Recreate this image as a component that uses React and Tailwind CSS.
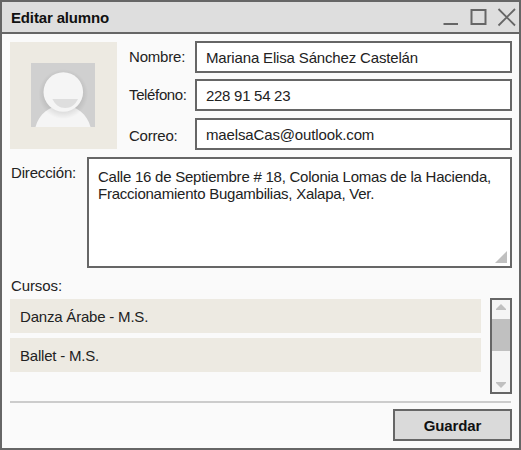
const FIELDS = [
  { label: 'Nombre:', value: 'Mariana Elisa Sánchez Castelán', gap: 'mt-0', pad: 'pb-0.5 tracking-[-0.2px]', tracking: 'tracking-[-0.16px]' },
  { label: 'Teléfono:', value: '228 91 54 23', gap: 'mt-1.5', pad: 'pb-0.5 tracking-[-0.36px]', tracking: 'tracking-[-0.28px]' },
  { label: 'Correo:', value: 'maelsaCas@outlook.com', gap: 'mt-[7px]', pad: 'pt-0.5 tracking-[-0.22px]', tracking: 'tracking-[-0.14px]' },
];

const COURSES = ['Danza Árabe - M.S.', 'Ballet - M.S.'];

function WindowControls() {
  return (
    <svg className="h-[30px] w-[77px]" viewBox="0 0 77 30" fill="none" stroke="#666" strokeWidth="2">
      <path d="M1.500 22H16" />
      <rect x="29.500" y="8" width="14" height="14" />
      <path d="M56.500 7L73 23.500M73 7L56.500 23.500" strokeWidth="1.8" />
    </svg>
  );
}

function Avatar() {
  return (
    <div className="h-[107px] w-[107px] shrink-0 bg-[#edeae2] pt-[21px] pl-[21px]">
      <svg className="h-16 w-16" viewBox="0 0 64 64">
        <defs>
          <radialGradient id="shade" cx="0.5" cy="0.5" r="0.5">
            <stop offset="0.7" stopColor="#000" stopOpacity="0.1" />
            <stop offset="1" stopColor="#000" stopOpacity="0" />
          </radialGradient>
        </defs>
        <rect width="64" height="64" fill="#d0d0d0" />
        <path d="M4.500 64C8 51 18 42.500 32 42.500S56 51 59.500 64Z" fill="#f5f5f5" />
        <circle cx="32.300" cy="31" r="25" fill="url(#shade)" />
        <circle cx="32.300" cy="29" r="19.800" fill="#f5f5f5" />
        <path d="M21.300 36H47C44 42 40 45 34.200 45S24.500 42 21.300 36Z" fill="#dedede" />
      </svg>
    </div>
  );
}

function Scrollbar() {
  return (
    <div className="flex h-24 w-[22px] shrink-0 flex-col border-2 border-[#666] bg-[#f5f5f5]">
      <svg className="h-[19px] w-[18px]" viewBox="0 0 18 19">
        <path d="M4 9L9 4L14 9V10H4Z" fill="#c0c0c0" />
      </svg>
      <div className="h-8 bg-[#c0c0c0]" />
      <svg className="mt-auto h-[19px] w-[18px]" viewBox="0 0 18 19">
        <path d="M4 9H14V10L9 15L4 10Z" fill="#c0c0c0" />
      </svg>
    </div>
  );
}

export default function App() {
  return (
    <div className="flex h-[450px] w-[521px] flex-col border-2 border-[#666] bg-[#fafafa] font-['Liberation_Sans',Arial,sans-serif] text-[15px] leading-[17px] text-[#222]">
      <header className="flex h-8 shrink-0 items-center justify-between border-b-2 border-[#666] bg-[#dedede] pl-[9px]">
        <h1 className="font-bold tracking-[-0.15px] text-[#111]">Editar alumno</h1>
        <WindowControls />
      </header>

      <main className="flex flex-1 flex-col pr-[7px] pl-2">
        <section className="flex pt-[7px]">
          <div className="pt-px">
            <Avatar />
          </div>
          <div className="ml-3 flex-1">
            {FIELDS.map(({ label, value, gap, pad, tracking }) => (
              <div key={label} className={'flex h-8 ' + gap}>
                <span className={'flex w-[66px] shrink-0 items-center ' + pad}>{label}</span>
                <div className={'flex flex-1 items-center border-2 border-[#666] bg-white pt-px pl-[9px] ' + tracking}>{value}</div>
              </div>
            ))}
          </div>
        </section>

        <section className="mt-[7px] flex h-[111px]">
          <span className="w-[77px] shrink-0 pt-[7px] pl-px tracking-[-0.16px]">Dirección:</span>
          <div className="relative flex-1 border-2 border-[#666] bg-white pt-[9px] pl-[9px]">
            <p className="tracking-[-0.24px]">
              Calle 16 de Septiembre # 18, Colonia Lomas de la Hacienda,
              <br />
              Fraccionamiento Bugambilias, Xalapa, Ver.
            </p>
            <svg className="absolute right-[3px] bottom-[3px] h-3 w-3" viewBox="0 0 12 12">
              <path d="M12 0V12H0Z" fill="#c0c0c0" />
            </svg>
          </div>
        </section>

        <h2 className="mt-[9px] pl-px tracking-[-0.1px]">Cursos:</h2>
        <section className="mt-1 flex justify-between">
          <ul className="mt-px flex w-[471px] flex-col gap-[5px] tracking-[-0.2px]">
            {COURSES.map((course) => (
              <li key={course} className="flex h-[34px] items-center bg-[#edeae2] pt-px pl-2.5">
                {course}
              </li>
            ))}
          </ul>
          <Scrollbar />
        </section>

        <hr className="mt-[7px] mr-px border-t-2 border-[#ccc]" />
        <button className="mt-1.5 h-8 w-[119px] self-end border-2 border-[#666] bg-[#dadada] font-bold tracking-[-0.1px] text-[#111]">
          Guardar
        </button>
      </main>
    </div>
  );
}
